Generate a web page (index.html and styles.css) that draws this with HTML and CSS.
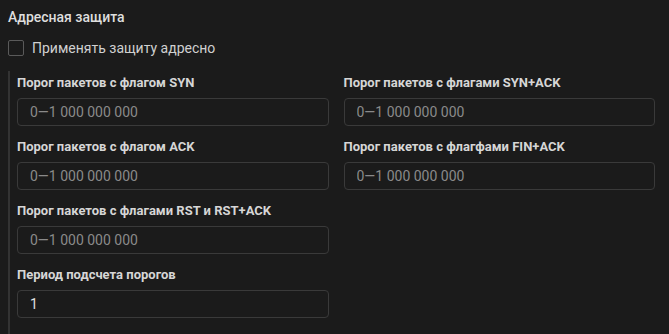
FILE: index.html
```html
<!DOCTYPE html>
<html lang="ru">
<head>
  <meta charset="UTF-8" />
  <title>Адресная защита</title>
  <meta name="viewport" content="width=device-width, initial-scale=1.0" />
  <link rel="stylesheet" href="styles.css">
</head>
<body>

<div class="section">
  <h3>Адресная защита</h3>

  <label class="check">
    <input type="checkbox" />
    <span>Применять защиту адресно</span>
  </label>

  <!-- Пороги -->
  <div class="group">
    <div class="field">
      <label for="syn">Порог пакетов с флагом SYN</label>
      <input type="text" id="syn" placeholder="0—1 000 000 000" />
    </div>
    <div class="field">
      <label for="synack">Порог пакетов с флагами SYN+ACK</label>
      <input type="text" id="synack" placeholder="0—1 000 000 000" />
    </div>
    <div class="field">
      <label for="ack">Порог пакетов с флагом ACK</label>
      <input type="text" id="ack" placeholder="0—1 000 000 000" />
    </div>
    <div class="field">
      <label for="finack">Порог пакетов с флагфами FIN+ACK</label>
      <input type="text" id="finack" placeholder="0—1 000 000 000" />
    </div>
    <div class="field">
      <label for="rst">Порог пакетов с флагами RST и RST+ACK</label>
      <input type="text" id="rst" placeholder="0—1 000 000 000" />
    </div>
    <div class="field empty"></div>
    <div class="field">
      <label for="period">Период подсчета порогов</label>
      <input type="text" id="period" value="1" />
    </div>
  </div>
</div>

</body>
</html>
```

FILE: styles.css
```css
body {
  background: #1b1b1b;
  font-family: Roboto, 'Liberation Sans', sans-serif;
  color: #dcdcdc;
  margin: 0;
  overflow: hidden;
}

.section {
  padding: 7px 14px 0 8px;
}

h3 {
  margin: 0;
  font-size: 14px;
  line-height: 20px;
  font-weight: 500;
  color: #dedede;
}

.check {
  display: flex;
  align-items: center;
  gap: 8px;
  margin-top: 12px;
  height: 18px;
  font-size: 14px;
  color: #d0d0d0;
  cursor: pointer;
}

.check input {
  appearance: none;
  width: 16px;
  height: 16px;
  margin: 0;
  border: 1px solid #5a5a5a;
  border-radius: 2px;
  background: transparent;
}

.group {
  margin-top: 14px;
  border-left: 2px solid #333;
  padding: 4px 0 40px 7px;
  display: grid;
  grid-template-columns: 1fr 1fr;
  column-gap: 15px;
  row-gap: 13px;
}

.field label {
  display: block;
  font-size: 13px;
  line-height: 16px;
  font-weight: 700;
  color: #d6d6d6;
  margin-bottom: 7px;
}

.field input {
  box-sizing: border-box;
  width: 100%;
  height: 28px;
  padding: 0 12px;
  background: #1b1b1b;
  border: 1px solid #3a3a3a;
  border-radius: 4px;
  color: #e0e0e0;
  font-family: inherit;
  font-size: 14px;
  outline: none;
}

.field input::placeholder {
  color: #8a8a8a;
}
```
